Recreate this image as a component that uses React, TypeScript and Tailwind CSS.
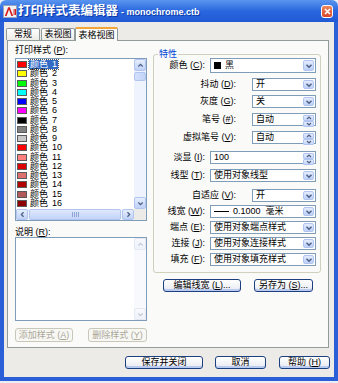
import React from "react";

type Dir = "down" | "up" | "left" | "right";
const CH: Record<Dir, string> = {
  down: "M1.5 2.8L4 5.3L6.5 2.8",
  up: "M1.5 5.2L4 2.7L6.5 5.2",
  left: "M5.2 1.5L2.7 4L5.2 6.5",
  right: "M2.8 1.5L5.3 4L2.8 6.5",
};

function Chev({ dir = "down", color = "#4d6185", s = 8 }: { dir?: Dir; color?: string; s?: number }) {
  return (
    <svg width={s} height={s} viewBox="0 0 8 8" className="block">
      <path d={CH[dir]} fill="none" stroke={color} strokeWidth="1.5" />
    </svg>
  );
}

function SBtn({ dir, cls, disabled }: { dir: Dir; cls: string; disabled?: boolean }) {
  return (
    <div
      className={`${cls} shrink-0 rounded-[2px] border flex items-center justify-center ${
        disabled
          ? "border-[#e3e8f3] bg-linear-to-b from-[#f7f9fd] to-[#eef2fa]"
          : "border-[#b2c5f0] bg-linear-to-b from-[#e6eefd] to-[#bfd1f7]"
      }`}
    >
      <Chev dir={dir} color={disabled ? "#c5cbd8" : "#4d6185"} s={7} />
    </div>
  );
}

function Combo({ w, h = "h-[13px]", children }: { w: string; h?: string; children: React.ReactNode }) {
  return (
    <div className={`${w} ${h} border border-[#7f9db9] bg-white flex items-stretch`}>
      <div className="flex-1 flex items-center pl-[3px] text-[9px] leading-none whitespace-nowrap overflow-hidden">
        {children}
      </div>
      <div className="m-[1px] w-[11px] rounded-[2px] border border-[#b2c5f0] bg-linear-to-b from-[#e4ecfd] to-[#bccff7] flex items-center justify-center">
        <Chev />
      </div>
    </div>
  );
}

function Spin({ w, children }: { w: string; children: React.ReactNode }) {
  return (
    <div className={`${w} h-[13px] border border-[#7f9db9] bg-white flex items-stretch`}>
      <div className="flex-1 flex items-center pl-[3px] text-[9px] leading-none whitespace-nowrap">{children}</div>
      <div className="m-[1px] w-[11px] flex flex-col">
        <div className="flex-1 rounded-[1px] border border-[#b2c5f0] bg-linear-to-b from-[#e4ecfd] to-[#c6d6f8] flex items-center justify-center">
          <svg width="6" height="4" viewBox="0 0 6 4" className="block">
            <path d="M1 3L3 1L5 3" fill="none" stroke="#4d6185" strokeWidth="1.2" />
          </svg>
        </div>
        <div className="flex-1 rounded-[1px] border border-[#b2c5f0] bg-linear-to-b from-[#e4ecfd] to-[#c6d6f8] flex items-center justify-center">
          <svg width="6" height="4" viewBox="0 0 6 4" className="block">
            <path d="M1 1L3 3L5 1" fill="none" stroke="#4d6185" strokeWidth="1.2" />
          </svg>
        </div>
      </div>
    </div>
  );
}

function Lbl({ t, k }: { t: string; k: string }) {
  return (
    <span className="text-[9px] leading-none whitespace-nowrap">
      {t} (<span className="underline">{k}</span>):
    </span>
  );
}

function Row({ mt, t, k, wide, children }: { mt: string; t: string; k: string; wide?: boolean; children: React.ReactNode }) {
  return (
    <div className={`flex items-center justify-end ${mt}`}>
      <Lbl t={t} k={k} />
      <div className={wide ? "ml-[5px]" : "ml-[16px]"}>{children}</div>
    </div>
  );
}

function Btn({ cls, children, disabled }: { cls: string; children: React.ReactNode; disabled?: boolean }) {
  return (
    <div
      className={`${cls} rounded-[3px] border flex items-center justify-center text-[9px] leading-none whitespace-nowrap ${
        disabled
          ? "border-[#c9c7ba] text-[#aca899] bg-[#f7f7f4]"
          : "border-[#1d3f80] text-black bg-linear-to-b from-white to-[#e8eaf0] shadow-[inset_0_-2px_0_#b9cbf0,inset_0_1px_0_#ffffff]"
      }`}
    >
      {children}
    </div>
  );
}

const COLORS = [
  "#ff0000",
  "#ffff00",
  "#00ff00",
  "#00ffff",
  "#0000ff",
  "#ff00ff",
  "#000000",
  "#808080",
  "#c8c8c8",
  "#ff0000",
  "#ff7f7f",
  "#dd0000",
  "#dd6f6f",
  "#b20000",
  "#b25959",
  "#8c0000",
];

export default function App() {
  return (
    <div className="w-[338px] h-[383px] bg-[#eaeef7] font-['Liberation_Sans','Noto_Sans_CJK_SC',sans-serif] text-black">
      <div className="w-[338px] h-[381px] flex flex-col">
        {/* Title bar */}
        <div className="h-[22px] shrink-0 rounded-t-[6px] bg-linear-to-b from-[#5a95ee] via-[#2a67df] to-[#2059d4] flex items-center pl-[3px] pr-[5px]">
          <svg width="14" height="13" viewBox="0 0 14 13" className="block shrink-0">
            <rect x="0.5" y="0.5" width="13" height="12" fill="#f3f3f3" stroke="#9aa6bd" />
            <path d="M1.8 11L5.2 2.2H6.8L10.2 11H8.4L6 4.6L3.6 11Z" fill="#d61c1c" />
            <rect x="10.6" y="4" width="1" height="6" fill="#d61c1c" />
            <rect x="12" y="4" width="1" height="6" fill="#d61c1c" />
          </svg>
          <div className="ml-[1px] flex items-baseline text-white whitespace-nowrap [text-shadow:1px_1px_0_#0b3aa6]">
            <span className="text-[12.5px] font-bold leading-none">打印样式表编辑器</span>
            <span className="ml-[3px] text-[9px] font-bold leading-none">- monochrome.ctb</span>
          </div>
          <div className="ml-auto w-[12px] h-[13px] rounded-[3px] border border-white bg-linear-to-b from-[#f0865a] to-[#d6452a] flex items-center justify-center">
            <svg width="7" height="7" viewBox="0 0 7 7" className="block">
              <path d="M1 1L6 6M6 1L1 6" stroke="white" strokeWidth="1.6" />
            </svg>
          </div>
        </div>

        {/* Body */}
        <div className="flex-1 border-x-[4px] border-b-[4px] border-[#2a5fd8] bg-[#ecebe8] flex flex-col pt-[5px]">
          {/* Tabs */}
          <div className="relative z-10 flex items-start h-[14px] pl-[2px]">
            <div className="mt-[1px] w-[34px] h-[12px] border border-b-0 border-[#919b9c] rounded-t-[2px] bg-linear-to-b from-white to-[#ecebe6] text-[9px] leading-none flex items-center justify-center">
              常规
            </div>
            <div className="mt-[1px] ml-[1px] w-[34px] h-[12px] border border-b-0 border-[#919b9c] rounded-t-[2px] bg-linear-to-b from-white to-[#ecebe6] text-[9px] leading-none flex items-center justify-center">
              表视图
            </div>
            <div className="w-[43px] h-[14px] border-x border-[#919b9c] border-t-[2px] border-t-[#f0a53a] rounded-t-[2px] bg-[#fafaf8] text-[9px] leading-none flex items-center justify-center">
              表格视图
            </div>
          </div>

          {/* Panel */}
          <div className="ml-[3px] mt-[-1px] w-[322px] h-[308px] border border-[#919b9c] bg-[#fafaf8] flex pl-[7px]">
            {/* Left column */}
            <div className="w-[132px] flex flex-col">
              <div className="mt-[4px] h-[10px] text-[9px] leading-[10px]">
                打印样式 (<span className="underline">P</span>):
              </div>
              <div className="mt-[3px] h-[163px] border border-[#7f9db9] bg-white flex flex-col">
                <div className="h-[150px] flex">
                  <div className="flex-1 pt-[1px] overflow-hidden">
                    {COLORS.map((c, i) => (
                      <div key={i} className="h-[9.25px] flex items-center">
                        <div className="ml-[1px] w-[10px] h-[7px] border border-[#5a5a5a] shrink-0" style={{ background: c }} />
                        <span
                          className={`ml-[2px] px-[1px] h-[9px] flex items-center text-[9px] leading-none whitespace-nowrap ${
                            i === 0 ? "bg-[#316ac5] text-white outline outline-dotted outline-[#555]" : ""
                          }`}
                        >
                          <span>颜色</span>
                          <span className="ml-[4px]">{i + 1}</span>
                        </span>
                      </div>
                    ))}
                  </div>
                  <div className="w-[12px] bg-[#eef3fd] flex flex-col">
                    <SBtn dir="up" cls="h-[12px]" />
                    <div className="mt-[1px] h-[9px] rounded-[2px] border border-[#b2c5f0] bg-linear-to-r from-[#d3e0fb] to-[#c3d4f8]" />
                    <div className="flex-1" />
                    <SBtn dir="down" cls="h-[12px]" />
                  </div>
                </div>
                <div className="h-[11px] flex">
                  <div className="flex-1 flex bg-[#eef3fd]">
                    <SBtn dir="left" cls="w-[12px]" />
                    <div className="ml-[1px] w-[92px] rounded-[2px] border border-[#b2c5f0] bg-linear-to-b from-[#dfe8fc] to-[#c3d4f8] flex items-center justify-center">
                      <div className="flex gap-[1px]">
                        <div className="w-[1px] h-[5px] bg-[#8da4d4]" />
                        <div className="w-[1px] h-[5px] bg-[#8da4d4]" />
                        <div className="w-[1px] h-[5px] bg-[#8da4d4]" />
                        <div className="w-[1px] h-[5px] bg-[#8da4d4]" />
                      </div>
                    </div>
                    <div className="flex-1" />
                    <SBtn dir="right" cls="w-[12px]" />
                  </div>
                  <div className="w-[12px] bg-[#ecebe8]" />
                </div>
              </div>
              <div className="mt-[6px] h-[10px] text-[9px] leading-[10px]">
                说明 (<span className="underline">R</span>):
              </div>
              <div className="h-[84px] border border-[#7f9db9] bg-white flex">
                <div className="flex-1" />
                <div className="w-[12px] bg-[#f7f9fd] flex flex-col">
                  <SBtn dir="up" cls="h-[12px]" disabled />
                  <div className="flex-1" />
                  <SBtn dir="down" cls="h-[12px]" disabled />
                </div>
              </div>
              <div className="mt-[7px] h-[14px] flex">
                <Btn cls="w-[58px] h-[14px]" disabled>
                  添加样式 (<span className="underline">A</span>)
                </Btn>
                <Btn cls="ml-auto w-[59px] h-[14px]" disabled>
                  删除样式 (<span className="underline">Y</span>)
                </Btn>
              </div>
            </div>

            {/* Right column */}
            <div className="ml-[6px] w-[168px] flex flex-col">
              <div className="relative mt-[13px] h-[219px] border border-[#d0d0bf] rounded-[3px] flex flex-col pr-[4px]">
                <span className="absolute left-[4px] top-[-6px] px-[1px] bg-[#fafaf8] text-[9px] leading-[10px] text-[#0046d5]">
                  特性
                </span>
                <Row mt="mt-[3px]" t="颜色" k="C" wide>
                  <Combo w="w-[106px]" h="h-[15px]">
                    <span className="w-[7px] h-[7px] bg-black mr-[4px]" />
                    黑
                  </Combo>
                </Row>
                <Row mt="mt-[5px]" t="抖动" k="D">
                  <Combo w="w-[64px]">开</Combo>
                </Row>
                <Row mt="mt-[4px]" t="灰度" k="G">
                  <Combo w="w-[64px]">关</Combo>
                </Row>
                <Row mt="mt-[5px]" t="笔号" k="#">
                  <Spin w="w-[64px]">自动</Spin>
                </Row>
                <Row mt="mt-[5px]" t="虚拟笔号" k="V">
                  <Spin w="w-[64px]">自动</Spin>
                </Row>
                <Row mt="mt-[7px]" t="淡显" k="I" wide>
                  <Spin w="w-[106px]">100</Spin>
                </Row>
                <Row mt="mt-[5px]" t="线型" k="T" wide>
                  <Combo w="w-[106px]">使用对象线型</Combo>
                </Row>
                <Row mt="mt-[7px]" t="自适应" k="V">
                  <Combo w="w-[64px]">开</Combo>
                </Row>
                <Row mt="mt-[3px]" t="线宽" k="W" wide>
                  <Combo w="w-[106px]">
                    <span className="w-[15px] h-[1px] bg-black mr-[4px]" />
                    0.1000&nbsp;&nbsp;毫米
                  </Combo>
                </Row>
                <Row mt="mt-[3px]" t="端点" k="E" wide>
                  <Combo w="w-[106px]">使用对象端点样式</Combo>
                </Row>
                <Row mt="mt-[3px]" t="连接" k="J" wide>
                  <Combo w="w-[106px]">使用对象连接样式</Combo>
                </Row>
                <Row mt="mt-[3px]" t="填充" k="F" wide>
                  <Combo w="w-[106px]">使用对象填充样式</Combo>
                </Row>
              </div>
              <div className="mt-[6px] pl-[10px] flex gap-[13px]">
                <Btn cls="w-[78px] h-[13px]">
                  编辑线宽 (<span className="underline">L</span>)...
                </Btn>
                <Btn cls="w-[59px] h-[13px]">
                  另存为 (<span className="underline">S</span>)...
                </Btn>
              </div>
            </div>
          </div>

          {/* Bottom buttons */}
          <div className="mt-[8px] flex justify-end pr-[4px]">
            <Btn cls="w-[78px] h-[13px]">保存并关闭</Btn>
            <Btn cls="ml-[12px] w-[51px] h-[13px]">取消</Btn>
            <Btn cls="ml-[13px] w-[51px] h-[13px]">
              帮助 (<span className="underline">H</span>)
            </Btn>
          </div>
        </div>
      </div>
    </div>
  );
}
